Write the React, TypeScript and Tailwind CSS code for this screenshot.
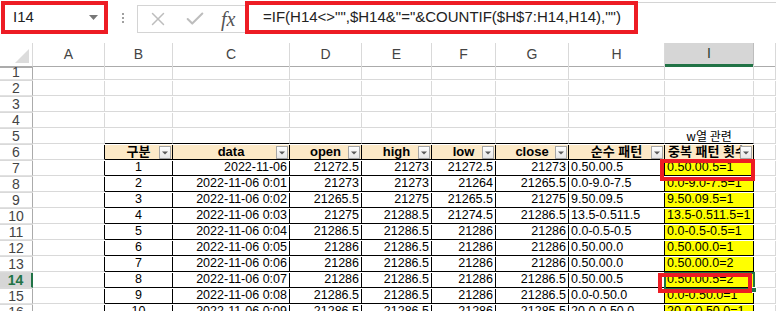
import React from "react";
import { X, Check } from "lucide-react";

const GRID =
  "grid grid-cols-[33px_72px_68px_117px_72px_70px_64px_73px_96px_89px_22px]";
const LETTERS = ["A", "B", "C", "D", "E", "F", "G", "H", "I", "J"];
const HEADERS = ["구분", "data", "open", "high", "low", "close", "순수 패턴", "중복 패턴 횟수"];

// 구분, data, open, high, low, close, 순수 패턴, 중복 패턴 횟수
const data: string[][] = [
  ["1", "2022-11-06", "21272.5", "21273", "21272.5", "21273", "0.50.00.5", "0.50.00.5=1"],
  ["2", "2022-11-06 0:01", "21273", "21273", "21264", "21265.5", "0.0-9.0-7.5", "0.0-9.0-7.5=1"],
  ["3", "2022-11-06 0:02", "21265.5", "21275", "21265.5", "21275", "9.50.09.5", "9.50.09.5=1"],
  ["4", "2022-11-06 0:03", "21275", "21288.5", "21274.5", "21286.5", "13.5-0.511.5", "13.5-0.511.5=1"],
  ["5", "2022-11-06 0:04", "21286.5", "21286.5", "21286", "21286", "0.0-0.5-0.5", "0.0-0.5-0.5=1"],
  ["6", "2022-11-06 0:05", "21286", "21286.5", "21286", "21286", "0.50.00.0", "0.50.00.0=1"],
  ["7", "2022-11-06 0:06", "21286", "21286.5", "21286", "21286", "0.50.00.0", "0.50.00.0=2"],
  ["8", "2022-11-06 0:07", "21286", "21286.5", "21286", "21286.5", "0.50.00.5", "0.50.00.5=2"],
  ["9", "2022-11-06 0:08", "21286.5", "21286.5", "21286", "21286.5", "0.0-0.50.0", "0.0-0.50.0=1"],
  ["10", "2022-11-06 0:09", "21286.5", "21286.5", "21286", "21285.5", "20.0-0.50.0", "20.0-0.50.0=1"],
];

const FilterButton = () => (
  <div className="absolute right-[1px] top-[1px] w-[12px] h-[13px] border border-[#a6a6a6] bg-gradient-to-b from-white to-[#e6e6e6] flex items-center justify-center">
    <svg width="6" height="4" viewBox="0 0 6 4">
      <path d="M0 0.5h6L3 3.5z" fill="#5a5a5a" />
    </svg>
  </div>
);

const Cell = ({ r, c }: { r: number; c: number }) => {
  const inTable = r >= 6 && c >= 1 && c <= 8;
  const rightBlack = inTable || (c === 0 && r >= 6);
  const bottomBlack = inTable || (r === 5 && c >= 1 && c <= 8);

  let bg = "";
  if (r === 6 && inTable) bg = "bg-[#fce9c7]";
  else if (r >= 7 && c === 8) bg = "bg-[#ffff00]";

  let content: React.ReactNode = null;
  let align = "justify-start";

  if (r === 5 && c === 8) {
    content = (
      <span className="font-['Noto_Sans_CJK_KR'] text-[12px] leading-[14px]">w열 관련</span>
    );
    align = "justify-center";
  } else if (r === 6 && inTable) {
    const h = HEADERS[c - 1];
    align = c === 8 ? "justify-start pl-[3px]" : "justify-center";
    content = (
      <>
        <span className="font-bold font-['Liberation_Sans','Noto_Sans_CJK_KR',sans-serif] text-[13px]">
          {h}
        </span>
        <FilterButton />
      </>
    );
  } else if (r >= 7 && inTable) {
    const v = data[r - 7][c - 1];
    content = <span>{v}</span>;
    if (c === 1) align = "justify-center";
    else if (c <= 6) align = "justify-end pr-[2px]";
    else align = "justify-start pl-[2px]";
  }

  return (
    <div
      className={`relative flex items-end overflow-hidden whitespace-nowrap border-r border-b leading-[15px] ${
        rightBlack ? "border-r-black" : "border-r-[#d9d9d9]"
      } ${bottomBlack ? "border-b-black" : "border-b-[#d9d9d9]"} ${bg} ${align}`}
    >
      {content}
    </div>
  );
};

const App: React.FC = () => {
  const rowNums = Array.from({ length: 16 }, (_, i) => i + 1);

  return (
    <div className="relative w-[776px] h-[311px] overflow-hidden bg-white text-black font-['Liberation_Sans',sans-serif] text-[12.5px]">
      {/* Formula bar */}
      <div className="h-[43px] flex items-start">
        <div className="ml-[1px] mt-[1px] w-[107px] h-[33px] border-4 border-[#ed1c24] flex items-center justify-between pl-[8px] pr-[6px] text-[15px] text-[#222]">
          <span>I14</span>
          <svg width="9" height="5" viewBox="0 0 9 5">
            <path d="M0 0h9L4.5 5z" fill="#777" />
          </svg>
        </div>
        <div className="w-[29px] h-[33px] mt-[1px] flex flex-col items-center justify-center gap-[2px]">
          <div className="w-[2px] h-[2px] bg-[#a0a0a0]" />
          <div className="w-[2px] h-[2px] bg-[#a0a0a0]" />
          <div className="w-[2px] h-[2px] bg-[#a0a0a0]" />
        </div>
        <div className="mt-[5px] w-[108px] h-[28px] border border-r-0 border-[#d4d4d4] flex items-center pl-[9px] gap-[15px]">
          <X className="w-[22px] h-[22px] text-[#bdbdbd]" strokeWidth={1.6} />
          <Check className="w-[22px] h-[22px] text-[#bdbdbd]" strokeWidth={2.2} />
          <span className="font-['Liberation_Serif',serif] italic text-[20px] text-[#555] leading-none">
            fx
          </span>
        </div>
        <div className="mt-[1px] w-[393px] h-[33px] border-4 border-[#ed1c24] flex items-center pl-[14px] text-[15px] text-[#222] whitespace-nowrap">
          =IF(H14&lt;&gt;"",$H14&amp;"="&amp;COUNTIF($H$7:H14,H14),"")
        </div>
        <div className="flex-1 mt-[2px] border-t border-[#d4d4d4]" />
      </div>

      {/* Column headers */}
      <div className={`${GRID} h-[22px] text-[14px] text-[#444]`}>
        <div className="relative border-r border-b border-r-[#d9d9d9] border-b-[#ababab]">
          <svg className="absolute right-[3px] bottom-[3px]" width="14" height="14" viewBox="0 0 14 14">
            <path d="M14 0V14H0z" fill="#dcdcdc" />
          </svg>
        </div>
        {LETTERS.map((l) =>
          l === "I" ? (
            <div
              key={l}
              className="flex items-center justify-center bg-[#d6d6d6] border-r border-r-[#bdbdbd] border-b-[3px] border-b-[#217346] text-[#2a3a30]"
            >
              {l}
            </div>
          ) : (
            <div
              key={l}
              className="flex items-center justify-center border-r border-b border-r-[#d9d9d9] border-b-[#ababab]"
            >
              {l === "J" ? "" : l}
            </div>
          )
        )}
        <div className="border-b border-b-[#ababab]" />
      </div>

      {/* Rows */}
      {rowNums.map((r) => (
        <div key={r} className={`${GRID} h-[16px]`}>
          {r === 14 ? (
            <div className="flex items-center justify-center bg-[#d6d6d6] border-r-2 border-r-[#217346] border-b border-b-[#d9d9d9] text-[14px] font-bold text-[#217346] leading-none">
              {r}
            </div>
          ) : (
            <div className="flex items-center justify-center border-r border-b border-r-[#ababab] border-b-[#e1e1e1] text-[14px] text-[#444] leading-none">
              {r}
            </div>
          )}
          {LETTERS.map((_, c) => (
            <Cell key={c} r={r} c={c} />
          ))}
          <div className="border-b border-b-[#d9d9d9]" />
        </div>
      ))}

      {/* Selection on I14 */}
      <div className="absolute left-[664px] top-[272px] w-[91px] h-[18px] border-2 border-[#217346]" />
      <div className="absolute left-[751px] top-[287px] w-[6px] h-[6px] bg-[#217346] border border-white" />

      {/* Red annotation boxes */}
      <div className="absolute left-[660px] top-[159px] w-[95px] h-[22px] border-4 border-[#ed1c24]" />
      <div className="absolute left-[658px] top-[273px] w-[94px] h-[20px] border-4 border-[#ed1c24]" />
    </div>
  );
};

export default App;
